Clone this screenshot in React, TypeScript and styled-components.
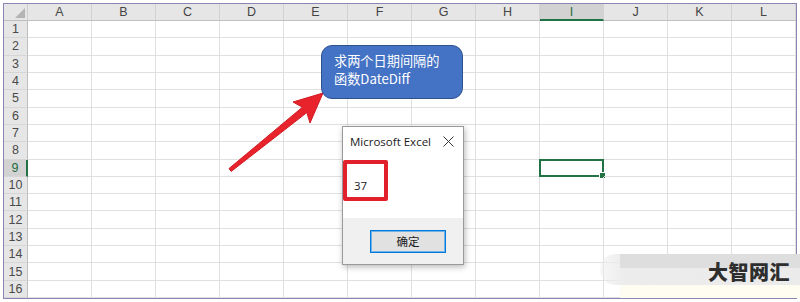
import styled, { createGlobalStyle, css } from "styled-components";

const GlobalStyle = createGlobalStyle`
  html, body {
    margin: 0;
    padding: 0;
    background: #ffffff;
  }
`;

const COLUMNS = ["A", "B", "C", "D", "E", "F", "G", "H", "I", "J", "K", "L"];
const ROWS = Array.from({ length: 16 }, (_, i) => i + 1);
const SELECTED_COL = "I";
const SELECTED_ROW = 9;

const Frame = styled.div`
  position: relative;
  width: 800px;
  height: 302px;
  padding: 3px;
  box-sizing: border-box;
  overflow: hidden;
  font-family: "Liberation Sans", Arial, sans-serif;
`;

const Sheet = styled.div`
  display: grid;
  grid-template-columns: 24px repeat(12, 64px);
  grid-template-rows: 17px repeat(16, 1fr);
  width: 794px;
  height: 296px;
  box-sizing: border-box;
  border: 1px solid #8a86b4;
  background: #ffffff;
`;

const Corner = styled.div`
  position: relative;
  background: #e6e6e6;
  border-right: 1px solid #cfcfcf;
  border-bottom: 1px solid #bfbfbf;
  box-sizing: border-box;

  &::after {
    content: "";
    position: absolute;
    right: 2px;
    bottom: 2px;
    border-style: solid;
    border-width: 0 0 10px 10px;
    border-color: transparent transparent #b4b4b4 transparent;
  }
`;

const ColHeader = styled.div<{ $active?: boolean }>`
  display: flex;
  align-items: center;
  justify-content: center;
  background: #e6e6e6;
  color: #444444;
  font-size: 12.5px;
  border-right: 1px solid #d2d2d2;
  border-bottom: 1px solid #bfbfbf;
  box-sizing: border-box;

  ${({ $active }) =>
    $active &&
    css`
      background: #d2d2d2;
      color: #1e6b3f;
      border-bottom: 2px solid #217346;
    `}
`;

const RowHeader = styled.div<{ $active?: boolean }>`
  display: flex;
  align-items: center;
  justify-content: center;
  background: #e6e6e6;
  color: #4a4a4a;
  font-size: 12.5px;
  border-right: 1px solid #bfbfbf;
  border-bottom: 1px solid #d6d6d6;
  box-sizing: border-box;

  ${({ $active }) =>
    $active &&
    css`
      background: #d2d2d2;
      color: #1e6b3f;
      border-right: 2px solid #217346;
    `}
`;

const Cell = styled.div<{ $selected?: boolean }>`
  position: relative;
  border-right: 1px solid #e0e0e0;
  border-bottom: 1px solid #e0e0e0;
  box-sizing: border-box;

  ${({ $selected }) =>
    $selected &&
    css`
      border: 2px solid #217346;
      margin: -1px 0 0 -1px;

      &::after {
        content: "";
        position: absolute;
        right: -4px;
        bottom: -4px;
        width: 5px;
        height: 5px;
        background: #217346;
        border: 1px solid #ffffff;
      }
    `}
`;

const Callout = styled.div`
  position: absolute;
  left: 321px;
  top: 45px;
  width: 142px;
  height: 54px;
  box-sizing: border-box;
  padding: 6px 8px 0 12px;
  background: #4472c4;
  border: 1px solid #2f528f;
  border-radius: 11px;
  color: #ffffff;
  font-family: "Noto Sans CJK SC", "Noto Sans", sans-serif;
  font-size: 13.2px;
  line-height: 18px;
`;

const ArrowLayer = styled.svg`
  position: absolute;
  left: 0;
  top: 0;
  width: 800px;
  height: 302px;
  pointer-events: none;
`;

const Dialog = styled.div`
  position: absolute;
  left: 342px;
  top: 126px;
  width: 122px;
  height: 139px;
  box-sizing: border-box;
  display: flex;
  flex-direction: column;
  background: #ffffff;
  border: 1px solid #9a9a9a;
  box-shadow: 1px 2px 6px rgba(0, 0, 0, 0.28);
`;

const TitleBar = styled.div`
  height: 33px;
  box-sizing: border-box;
  display: flex;
  align-items: center;
  justify-content: space-between;
  padding: 0 9px 4px 7px;
  color: #1a1a1a;
  font-family: "Open Sans", "Liberation Sans", sans-serif;
  font-size: 11.5px;
`;

const CloseIcon = styled.svg`
  width: 11px;
  height: 11px;
  flex: none;
`;

const DialogBody = styled.div`
  flex: 1;
`;

const Highlight = styled.div`
  width: 45px;
  height: 41px;
  box-sizing: border-box;
  border: 4px solid #e2202b;
  border-radius: 2px;
  padding: 14px 0 0 7px;
  color: #1a1a1a;
  font-family: "Open Sans", "Liberation Sans", sans-serif;
  font-size: 11.5px;
  line-height: 16px;
`;

const Footer = styled.div`
  height: 46px;
  display: flex;
  align-items: center;
  justify-content: flex-end;
  padding: 0 17px 0 0;
  background: #f0f0f0;
`;

const OkButton = styled.div`
  width: 76px;
  height: 23px;
  box-sizing: border-box;
  display: flex;
  align-items: center;
  justify-content: center;
  background: #e1e1e1;
  border: 1px solid #0078d7;
  box-shadow: inset 0 0 0 1px #6fb3ea;
  color: #1a1a1a;
  font-family: "Noto Sans CJK SC", sans-serif;
  font-size: 11.5px;
`;

const Watermark = styled.div`
  position: absolute;
  left: 600px;
  top: 254px;
  width: 200px;
  height: 44px;
  display: flex;
  flex-direction: column;
`;

const WatermarkBand = styled.div`
  position: relative;
  height: 31px;
  box-sizing: border-box;
  display: flex;
  align-items: center;
  justify-content: flex-end;
  padding: 4px 10px 0 0;
  border-radius: 16px 0 0 16px;
  background: linear-gradient(
    to right,
    rgba(236, 236, 236, 0.4) 0%,
    #ececec 12%,
    #ebebeb 100%
  );

  &::before {
    content: "";
    position: absolute;
    left: 20px;
    right: 0;
    top: 0;
    height: 14px;
    background: #dedede;
  }
`;

const WatermarkText = styled.span`
  position: relative;
  color: #2e2e2e;
  font-family: "Noto Sans CJK SC", sans-serif;
  font-weight: 900;
  font-size: 20px;
  letter-spacing: 0.5px;
`;

const WatermarkShade = styled.div`
  height: 13px;
  margin-left: 20px;
  background: #fffdf2;
`;

function ArrowShape() {
  return (
    <ArrowLayer viewBox="0 0 800 302">
      <polygon
        points="229,168.6 302.4,107.2 293,102 323,93 310,123 306.8,112.6 231.2,171.4"
        fill="#e8232b"
        stroke="#d11a22"
        strokeWidth="1"
        strokeLinejoin="round"
      />
    </ArrowLayer>
  );
}

export default function App() {
  return (
    <>
      <GlobalStyle />
      <Frame>
        <Sheet>
          <Corner />
          {COLUMNS.map((c) => (
            <ColHeader key={c} $active={c === SELECTED_COL}>
              {c}
            </ColHeader>
          ))}
          {ROWS.map((r) => (
            <Row key={r} row={r} />
          ))}
        </Sheet>

        <ArrowShape />

        <Callout>
          求两个日期间隔的
          <br />
          函数DateDiff
        </Callout>

        <Dialog>
          <TitleBar>
            Microsoft Excel
            <CloseIcon viewBox="0 0 11 11">
              <path d="M0.5 0.5 L10.5 10.5 M10.5 0.5 L0.5 10.5" stroke="#333" strokeWidth="1" />
            </CloseIcon>
          </TitleBar>
          <DialogBody>
            <Highlight>37</Highlight>
          </DialogBody>
          <Footer>
            <OkButton>确定</OkButton>
          </Footer>
        </Dialog>

        <Watermark>
          <WatermarkBand>
            <WatermarkText>大智网汇</WatermarkText>
          </WatermarkBand>
          <WatermarkShade />
        </Watermark>
      </Frame>
    </>
  );
}

function Row({ row }: { row: number }) {
  return (
    <>
      <RowHeader $active={row === SELECTED_ROW}>{row}</RowHeader>
      {COLUMNS.map((c) => (
        <Cell key={c} $selected={row === SELECTED_ROW && c === SELECTED_COL} />
      ))}
    </>
  );
}
